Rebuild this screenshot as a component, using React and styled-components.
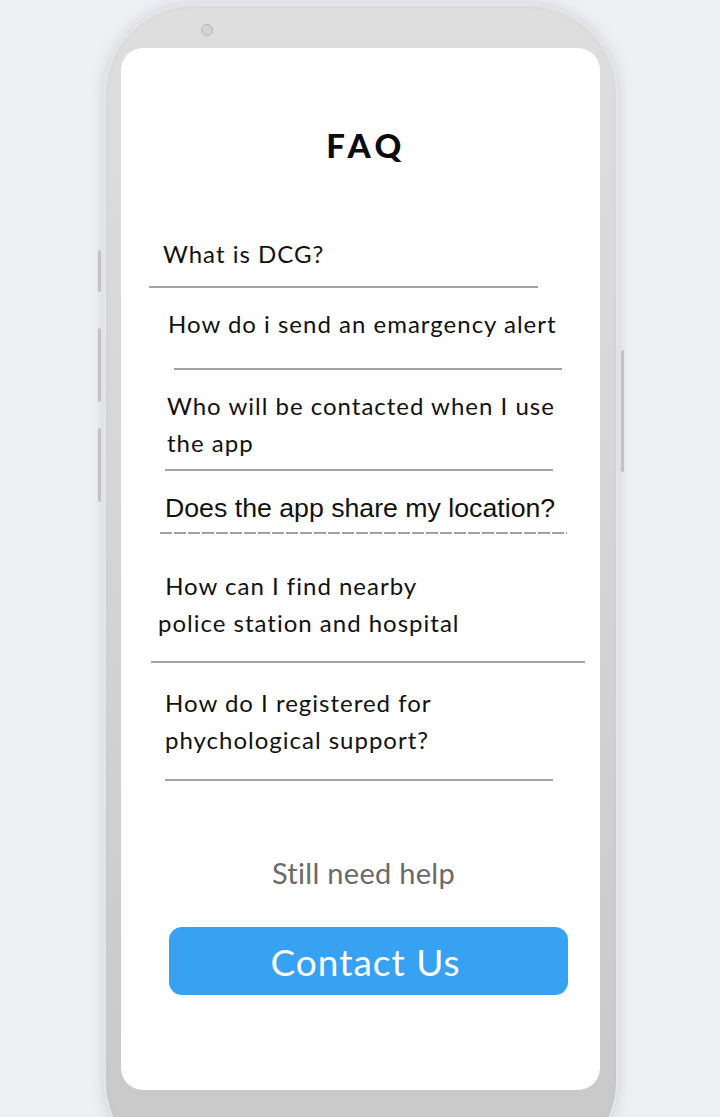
import React from "react";
import styled, { createGlobalStyle } from "styled-components";

const Global = createGlobalStyle`
  html, body { margin: 0; padding: 0; }
  body {
    background: #eef0f4;
    font-family: "Lato", "Liberation Sans", sans-serif;
    overflow: hidden;
  }
`;

const Page = styled.div`
  width: 720px;
  height: 1117px;
  overflow: hidden;
  background: #eef0f4;
  padding-top: 3px;
  box-sizing: border-box;
`;

const Phone = styled.div`
  position: relative;
  margin-left: 103px;
  width: 516px;
  height: 1170px;
  box-sizing: border-box;
  padding: 45px 19px 0 18px;
  border-radius: 92px;
  background: linear-gradient(to bottom, #dedede 0%, #d6d6d6 40%, #c8c8c8 100%);
  box-shadow:
    0 0 14px rgba(120, 125, 140, 0.25),
    inset 0 0 0 3px #e4e4e4,
    inset 0 0 10px rgba(0, 0, 0, 0.06);
`;

const SideButton = styled.span`
  position: absolute;
  width: 3px;
  border-radius: 2px;
  background: #c2c2c4;
  left: ${(p) => (p.$side === "left" ? "-5px" : "auto")};
  right: ${(p) => (p.$side === "right" ? "-5px" : "auto")};
  top: ${(p) => p.$top}px;
  height: ${(p) => p.$h}px;
`;

const Camera = styled.span`
  position: absolute;
  left: 98px;
  top: 21px;
  width: 10px;
  height: 10px;
  border-radius: 50%;
  background: #d2d2d2;
  border: 1.5px solid #b8b8b8;
`;

const Screen = styled.div`
  background: #ffffff;
  height: 1042px;
  border-radius: 22px;
  padding-top: 73px;
  box-sizing: border-box;
  display: flex;
  flex-direction: column;
`;

const Title = styled.h1`
  margin: 0;
  text-align: center;
  font-family: "Lato", sans-serif;
  font-weight: 900;
  font-size: 33px;
  line-height: 48px;
  letter-spacing: 4.5px;
  color: #0c0c0c;
  padding-left: 11px;
`;

const List = styled.div`
  display: flex;
  flex-direction: column;
  margin-top: 66px;
`;

const Item = styled.div`
  display: flex;
  flex-direction: column;
  align-items: flex-start;
  gap: ${(p) => p.$ruleGap}px;
  margin-top: ${(p) => p.$gap}px;
`;

const Question = styled.p`
  margin: 0 0 0 ${(p) => p.$indent}px;
  font-family: ${(p) =>
    p.$plain ? '"Liberation Sans", Arial, sans-serif' : '"Lato", sans-serif'};
  font-size: ${(p) => (p.$plain ? 26.7 : 24)}px;
  letter-spacing: ${(p) => (p.$plain ? 0 : 1)}px;
  line-height: 37px;
  color: #111;
  white-space: pre;
`;

const Rule = styled.div`
  margin-left: ${(p) => p.$indent}px;
  width: ${(p) => p.$width}px;
  height: 2px;
  background: ${(p) =>
    p.$dashed
      ? "repeating-linear-gradient(to right, #a0a0a0 0 12px, transparent 12px 14px)"
      : "#a3a3a3"};
`;

const Footer = styled.div`
  display: flex;
  flex-direction: column;
  align-items: center;
  gap: 36px;
  margin-top: 74px;
  padding-left: 14px;
`;

const Help = styled.p`
  margin: 0 0 0 -8px;
  text-align: center;
  font-family: "Lato", sans-serif;
  font-size: 29px;
  letter-spacing: 0.3px;
  line-height: 36px;
  color: #6a6a6a;
`;

const ContactButton = styled.button`
  width: 399px;
  height: 68px;
  border: none;
  border-radius: 13px;
  background: #37a1f2;
  color: #ffffff;
  font-family: "Lato", sans-serif;
  font-size: 37px;
  letter-spacing: 1px;
  padding: 0 6px 0 0;
  cursor: pointer;
  margin-left: 2px;
`;

const items = [
  { text: "What is DCG?", gap: 0, indent: 42, rGap: 14, rIndent: 28, rWidth: 389 },
  { text: "How do i send an emargency alert", gap: 17, indent: 47, rGap: 26, rIndent: 53, rWidth: 388 },
  { text: "Who will be contacted when I use\nthe app", gap: 17, indent: 46, rGap: 8, rIndent: 44, rWidth: 388 },
  { text: "Does the app share my location?", gap: 19, indent: 44, rGap: 5, rIndent: 39, rWidth: 407, plain: true, dashed: true },
  { text: " How can I find nearby\npolice station and hospital", gap: 33, indent: 37, rGap: 20, rIndent: 30, rWidth: 434 },
  { text: "How do I registered for\nphychological support?", gap: 21, indent: 44, rGap: 21, rIndent: 44, rWidth: 388 },
];

export default function App() {
  return (
    <Page>
      <Global />
      <Phone>
        <Camera />
        <SideButton $side="left" $top={247} $h={42} />
        <SideButton $side="left" $top={325} $h={74} />
        <SideButton $side="left" $top={425} $h={74} />
        <SideButton $side="right" $top={347} $h={122} />
        <Screen>
          <Title>FAQ</Title>
          <List>
            {items.map((it) => (
              <Item key={it.text} $gap={it.gap} $ruleGap={it.rGap}>
                <Question $indent={it.indent} $plain={it.plain}>
                  {it.text}
                </Question>
                <Rule $indent={it.rIndent} $width={it.rWidth} $dashed={it.dashed} />
              </Item>
            ))}
          </List>
          <Footer>
            <Help>Still need help</Help>
            <ContactButton>Contact Us</ContactButton>
          </Footer>
        </Screen>
      </Phone>
    </Page>
  );
}
